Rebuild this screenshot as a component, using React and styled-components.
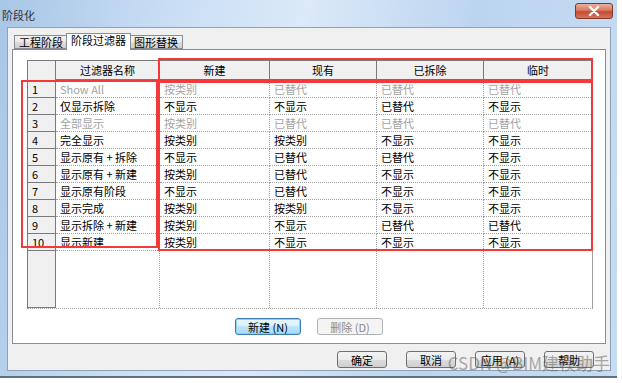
import React from "react";
import styled, { createGlobalStyle } from "styled-components";

const GlobalStyle = createGlobalStyle`
  html, body {
    margin: 0;
    padding: 0;
    background: #ffffff;
  }
  body {
    font-family: "Noto Sans CJK SC", "Liberation Sans", sans-serif;
    font-size: 11px;
  }
`;

const cols = [
  { title: "新建" },
  { title: "现有" },
  { title: "已拆除" },
  { title: "临时" },
];

const rows = [
  { name: "Show All", dim: true, v: ["按类别", "已替代", "已替代", "已替代"] },
  { name: "仅显示拆除", v: ["不显示", "不显示", "已替代", "不显示"] },
  { name: "全部显示", dim: true, v: ["按类别", "已替代", "已替代", "已替代"] },
  { name: "完全显示", v: ["按类别", "按类别", "不显示", "不显示"] },
  { name: "显示原有 + 拆除", v: ["不显示", "已替代", "已替代", "不显示"] },
  { name: "显示原有 + 新建", v: ["按类别", "已替代", "不显示", "不显示"] },
  { name: "显示原有阶段", v: ["不显示", "已替代", "不显示", "不显示"] },
  { name: "显示完成", v: ["按类别", "按类别", "不显示", "不显示"] },
  { name: "显示拆除 + 新建", v: ["按类别", "不显示", "已替代", "已替代"] },
  { name: "显示新建", v: ["按类别", "不显示", "不显示", "不显示"] },
];

export default function App() {
  return (
    <Page>
      <GlobalStyle />
      <Frame>
        <TitleBar>
          <Title>阶段化</Title>
          <CloseBtn>
            <svg width="12" height="10" viewBox="0 0 12 10">
              <path d="M2 1 L10 9 M10 1 L2 9" stroke="#ffffff" strokeWidth="2.4" strokeLinecap="round" />
            </svg>
          </CloseBtn>
        </TitleBar>
        <Client>
          <Tabs>
            <Tab>工程阶段</Tab>
            <Tab $active>阶段过滤器</Tab>
            <Tab>图形替换</Tab>
          </Tabs>
          <Panel>
            <TableWrap>
              <Grid>
                <Corner />
                <HeadCell>过滤器名称</HeadCell>
                {cols.map((c) => (
                  <HeadCell key={c.title}>{c.title}</HeadCell>
                ))}
                {rows.map((r, i) => (
                  <React.Fragment key={i}>
                    <RowNum>{i + 1}</RowNum>
                    <Cell $dim={r.dim}>{r.name}</Cell>
                    {r.v.map((val, j) => (
                      <Cell key={j} $dim={r.dim}>
                        {val}
                      </Cell>
                    ))}
                  </React.Fragment>
                ))}
                <RowNum />
                <EmptyCell />
                <EmptyCell />
                <EmptyCell />
                <EmptyCell />
                <EmptyCell />
              </Grid>
              <Mark style={{ left: 131, top: -2, width: 435, height: 23 }} />
              <Mark style={{ left: 131, top: 21, width: 435, height: 170 }} />
              <Mark style={{ left: -6, top: 20, width: 137, height: 168 }} />
            </TableWrap>
            <PanelButtons>
              <Button $focus>新建 (N)</Button>
              <Button disabled>删除 (D)</Button>
            </PanelButtons>
          </Panel>
          <Footer>
            <Button $wide>确定</Button>
            <Button $wide>取消</Button>
            <Button $wide>应用 (A)</Button>
            <Button $wide>帮助</Button>
          </Footer>
          <Watermark>CSDN @BIM建模助手</Watermark>
        </Client>
      </Frame>
    </Page>
  );
}

const Page = styled.div`
  width: 622px;
  height: 383px;
  background: #ffffff;
  overflow: hidden;
`;

const Frame = styled.div`
  width: 617px;
  height: 378px;
  box-sizing: border-box;
  display: flex;
  flex-direction: column;
  padding: 0 6px 5px 7px;
  background: linear-gradient(100deg, #a8c6e6 0%, #c9def4 25%, #dbe9f8 45%, #bcd5ef 70%, #c7dcf2 100%);
  border-bottom: 2px solid #5f7180;
`;

const TitleBar = styled.div`
  height: 27px;
  display: flex;
  align-items: flex-start;
  justify-content: space-between;
  margin-left: -5px;
`;

const Title = styled.div`
  margin-top: 8px;
  font-size: 11px;
  color: #333333;
  line-height: 14px;
`;

const CloseBtn = styled.div`
  margin-top: 3px;
  margin-right: -2px;
  width: 38px;
  height: 16px;
  border: 1px solid #7a3a2e;
  border-radius: 3px;
  box-sizing: border-box;
  background: linear-gradient(#eab0a0 0%, #d97a62 45%, #c6492f 55%, #d9745a 100%);
  display: flex;
  align-items: center;
  justify-content: center;
`;

const Client = styled.div`
  position: relative;
  flex: 1;
  background: #f0f0f0;
  border: 1px solid #8da2b8;
  display: flex;
  flex-direction: column;
  padding: 6px 4px 0 4px;
`;

const Tabs = styled.div`
  display: flex;
  align-items: flex-end;
  height: 15px;
  padding-left: 2px;
  position: relative;
  z-index: 1;
`;

const Tab = styled.div`
  height: ${(p) => (p.$active ? "17px" : "14px")};
  padding: 0 4px;
  margin: ${(p) => (p.$active ? "0 -2px -1px" : "0")};
  box-sizing: border-box;
  border: 1px solid #898c95;
  border-bottom: ${(p) => (p.$active ? "none" : "1px solid #898c95")};
  background: ${(p) =>
    p.$active ? "#ffffff" : "linear-gradient(#f2f2f2, #ebebeb 50%, #dddddd 50%, #cfcfcf)"};
  font-size: 11px;
  line-height: 13px;
  color: #000;
  position: relative;
  z-index: ${(p) => (p.$active ? 2 : 1)};
`;

const Panel = styled.div`
  height: 295px;
  box-sizing: border-box;
  border: 1px solid #898c95;
  background: #ffffff;
  display: flex;
  flex-direction: column;
  align-items: flex-start;
  padding: 10px 14px 0 14px;
`;

const TableWrap = styled.div`
  position: relative;
`;

const Grid = styled.div`
  display: grid;
  grid-template-columns: 28px 104px 110px 107px 107px 109px;
  grid-template-rows: 20px repeat(10, 17px) 57px;
  border-top: 1px solid #7a7a7a;
  border-left: 1px solid #7a7a7a;
  border-bottom: 1px dotted #a0a0a0;
  border-right: 1px dotted #a0a0a0;
  box-sizing: border-box;
  width: 566px;
`;

const Corner = styled.div`
  background: #f0f0f0;
  border-right: 1px solid #7a7a7a;
  border-bottom: 1px solid #7a7a7a;
`;

const HeadCell = styled.div`
  background: #f0f0f0;
  border-right: 1px solid #7a7a7a;
  border-bottom: 2px solid #7a7a7a;
  display: flex;
  align-items: center;
  justify-content: center;
  font-size: 11px;
  color: #000;
`;

const RowNum = styled.div`
  background: #f0f0f0;
  border-right: 1px solid #7a7a7a;
  border-bottom: 1px solid #7a7a7a;
  padding-left: 4px;
  font-size: 11px;
  line-height: 16px;
  color: #000;
`;

const Cell = styled.div`
  border-right: 1px dotted #a0a0a0;
  border-bottom: 1px dotted #a0a0a0;
  padding-left: 4px;
  font-size: 11px;
  line-height: 16px;
  white-space: nowrap;
  overflow: hidden;
  color: ${(p) => (p.$dim ? "#a3a3a3" : "#000000")};
`;

const EmptyCell = styled.div`
  border-right: 1px dotted #a0a0a0;
`;

const Mark = styled.div`
  position: absolute;
  box-sizing: border-box;
  border: 2px solid #f5393b;
  pointer-events: none;
`;

const PanelButtons = styled.div`
  align-self: stretch;
  display: flex;
  justify-content: center;
  gap: 16px;
  margin-top: 9px;
`;

const Button = styled.button`
  width: ${(p) => (p.$wide ? "50px" : "66px")};
  height: 17px;
  padding: 0;
  box-sizing: border-box;
  border-radius: 3px;
  font-family: "Noto Sans CJK SC", "Liberation Sans", sans-serif;
  font-size: 11px;
  line-height: 14px;
  color: #000;
  border: 1px solid ${(p) => (p.$focus ? "#3c7fb1" : "#707070")};
  background: ${(p) =>
    p.$focus
      ? "linear-gradient(#eaf6fd, #d9f0fc 50%, #bee6fd 50%, #a7d9f5)"
      : "linear-gradient(#f2f2f2, #ebebeb 50%, #dddddd 50%, #cfcfcf)"};
  box-shadow: ${(p) => (p.$focus ? "inset 0 0 0 1px #8fd0f2" : "none")};

  &:disabled {
    border-color: #adb2b5;
    background: #f4f4f4;
    color: #8a8a8a;
  }
`;

const Footer = styled.div`
  display: flex;
  justify-content: flex-end;
  gap: 19px;
  padding: 7px 12px 0 0;
`;

const Watermark = styled.div`
  position: absolute;
  right: 0;
  bottom: -3px;
  font-size: 17px;
  line-height: 20px;
  color: rgba(90, 90, 90, 0.5);
  white-space: nowrap;
  pointer-events: none;
`;
